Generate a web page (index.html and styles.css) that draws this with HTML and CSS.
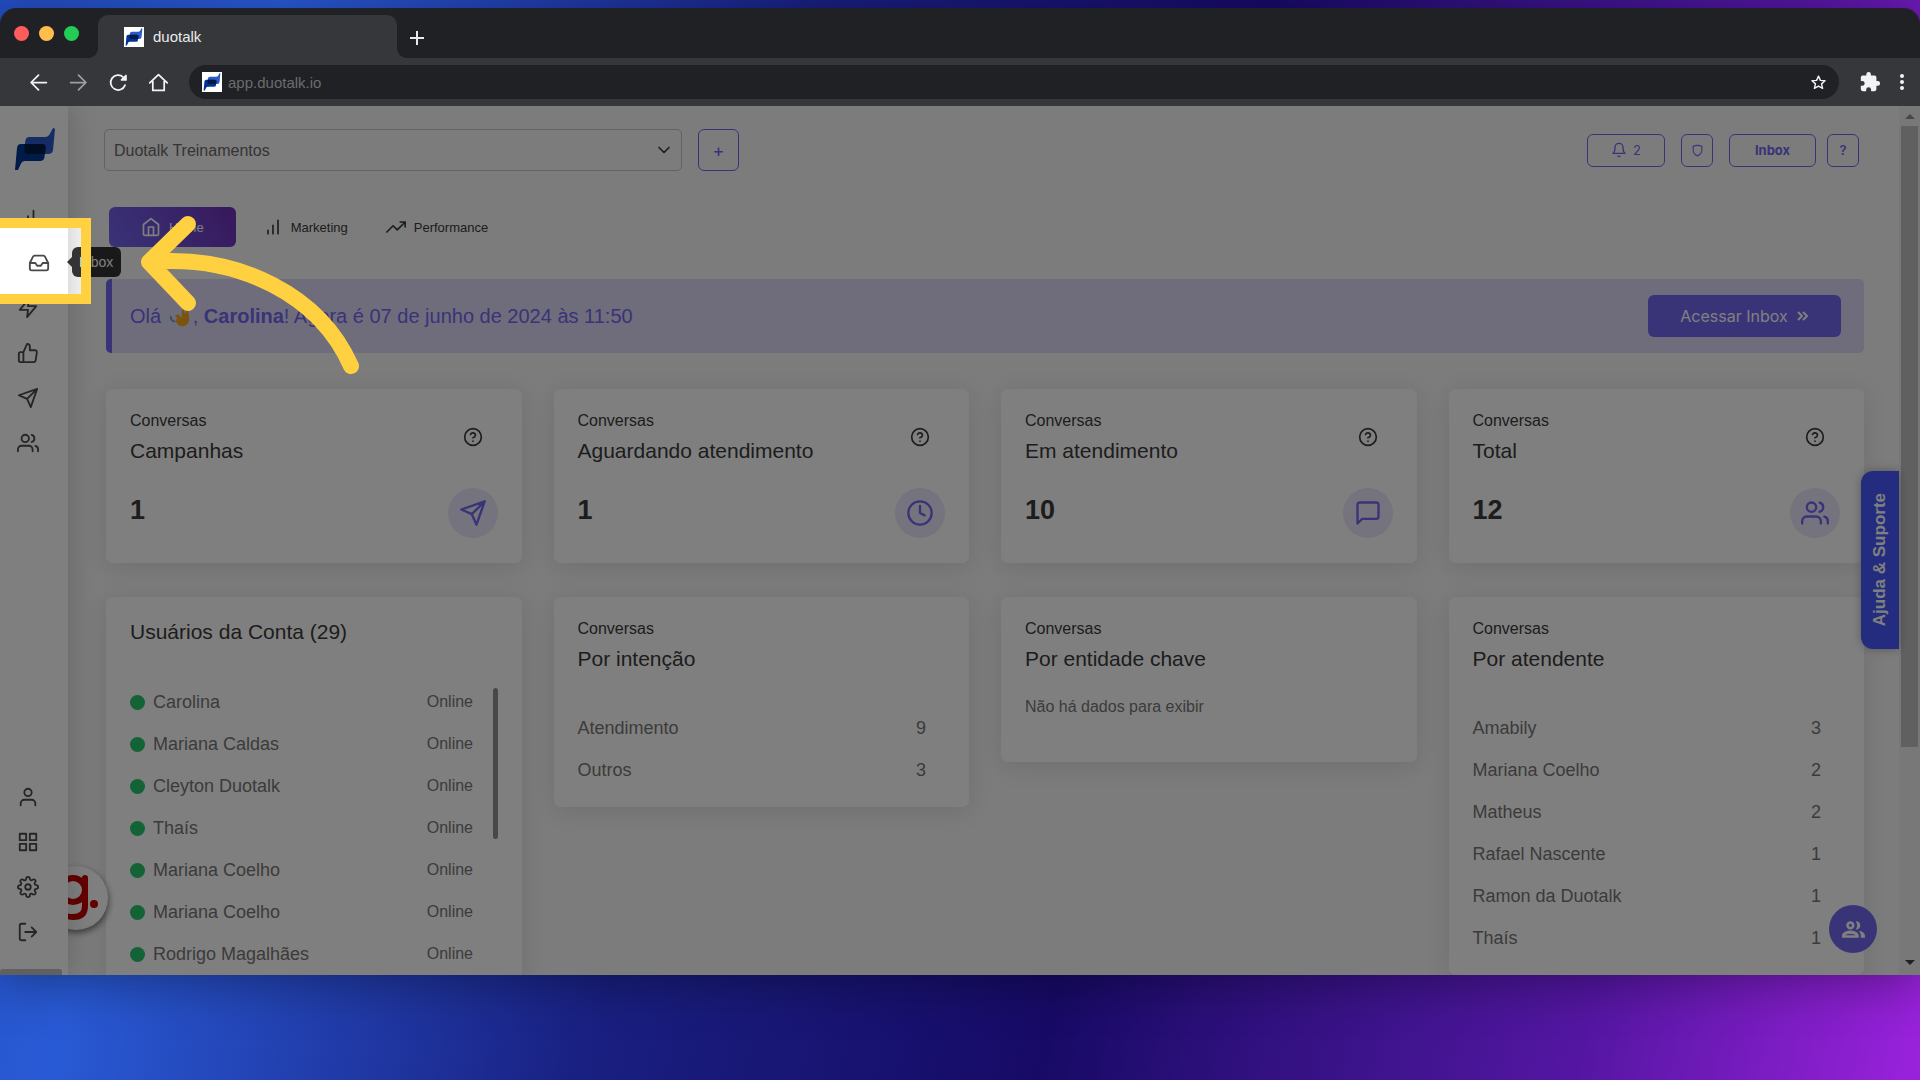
FILE: index.html
```html
<!DOCTYPE html>
<html lang="pt-BR">
<head>
    <meta charset="UTF-8">
    <meta name="viewport" content="width=device-width, initial-scale=1.0">
    <title>duotalk</title>
    <link rel="stylesheet" href="styles.css">
</head>
<body>
    <!-- icon set -->
    <svg class="sprite" aria-hidden="true">
        <symbol id="logo" viewBox="0 0 40 43">
            <path fill="#2b5bc8" d="M39 0 L40 1 L38 22 Q37.500 26 33 26 H13 Q9 26 9.300 22 L10.300 13 Q10.800 9 14.500 9 H30 Q33 9 34.500 6.500 L37.500 1 Q38 0 39 0z"/>
            <path fill="#003494" d="M6 16 H27 Q31 16 30.600 20 L29.500 29 Q29 33 25 33 H9.500 Q7 33 6 35.500 L3 42 H0 L2 20 Q2.400 16 6 16z"/>
            <path fill="#001a44" d="M9.900 16 H27 Q31 16 30.600 20 L29.900 26 H13 Q9 26 9.300 22z"/>
        </symbol>
        <symbol id="bars" viewBox="0 0 24 24"><path d="M18 20V4M12 20V10M6 20v-4"/></symbol>
        <symbol id="inbox" viewBox="0 0 24 24"><path d="M22 12h-6l-2 3h-4l-2-3H2"/><path d="M5.450 5.110L2 12v6a2 2 0 0 0 2 2h16a2 2 0 0 0 2-2v-6l-3.450-6.890A2 2 0 0 0 16.760 4H7.240a2 2 0 0 0-1.790 1.110z"/></symbol>
        <symbol id="zap" viewBox="0 0 24 24"><path d="M13 2L3 14h9l-1 8 10-12h-9l1-8z"/></symbol>
        <symbol id="thumb" viewBox="0 0 24 24"><path d="M14 9V5a3 3 0 0 0-3-3l-4 9v11h11.280a2 2 0 0 0 2-1.700l1.380-9a2 2 0 0 0-2-2.300zM7 22H4a2 2 0 0 1-2-2v-7a2 2 0 0 1 2-2h3"/></symbol>
        <symbol id="send" viewBox="0 0 24 24"><path d="M22 2L11 13M22 2l-7 20-4-9-9-4 20-7z"/></symbol>
        <symbol id="users" viewBox="0 0 24 24"><path d="M17 21v-2a4 4 0 0 0-4-4H5a4 4 0 0 0-4 4v2"/><circle cx="9" cy="7" r="4"/><path d="M23 21v-2a4 4 0 0 0-3-3.870M16 3.130a4 4 0 0 1 0 7.750"/></symbol>
        <symbol id="user" viewBox="0 0 24 24"><path d="M20 21v-2a4 4 0 0 0-4-4H8a4 4 0 0 0-4 4v2"/><circle cx="12" cy="7" r="4"/></symbol>
        <symbol id="grid" viewBox="0 0 24 24"><path d="M3 3h7v7H3zM14 3h7v7h-7zM14 14h7v7h-7zM3 14h7v7H3z"/></symbol>
        <symbol id="gear" viewBox="0 0 24 24"><circle cx="12" cy="12" r="3"/><path d="M19.400 15a1.650 1.650 0 0 0 .33 1.820l.06.06a2 2 0 0 1 0 2.830 2 2 0 0 1-2.830 0l-.06-.06a1.650 1.650 0 0 0-1.820-.33 1.650 1.650 0 0 0-1 1.510V21a2 2 0 0 1-2 2 2 2 0 0 1-2-2v-.09A1.650 1.650 0 0 0 9 19.400a1.650 1.650 0 0 0-1.820.33l-.06.06a2 2 0 0 1-2.830 0 2 2 0 0 1 0-2.830l.06-.06a1.650 1.650 0 0 0 .33-1.820 1.650 1.650 0 0 0-1.510-1H3a2 2 0 0 1-2-2 2 2 0 0 1 2-2h.09A1.650 1.650 0 0 0 4.600 9a1.650 1.650 0 0 0-.33-1.820l-.06-.06a2 2 0 0 1 0-2.830 2 2 0 0 1 2.830 0l.06.06a1.650 1.650 0 0 0 1.820.33H9a1.650 1.650 0 0 0 1-1.510V3a2 2 0 0 1 2-2 2 2 0 0 1 2 2v.09a1.650 1.650 0 0 0 1 1.510 1.650 1.650 0 0 0 1.820-.33l.06-.06a2 2 0 0 1 2.830 0 2 2 0 0 1 0 2.830l-.06.06a1.650 1.650 0 0 0-.33 1.820V9a1.650 1.650 0 0 0 1.510 1H21a2 2 0 0 1 2 2 2 2 0 0 1-2 2h-.09a1.650 1.650 0 0 0-1.510 1z"/></symbol>
        <symbol id="logout" viewBox="0 0 24 24"><path d="M9 21H5a2 2 0 0 1-2-2V5a2 2 0 0 1 2-2h4M16 17l5-5-5-5M21 12H9"/></symbol>
        <symbol id="home" viewBox="0 0 24 24"><path d="M3 9l9-7 9 7v11a2 2 0 0 1-2 2H5a2 2 0 0 1-2-2z"/><path d="M9 22V12h6v10"/></symbol>
        <symbol id="trend" viewBox="0 0 24 24"><path d="M23 6l-9.500 9.500-5-5L1 18M17 6h6v6"/></symbol>
        <symbol id="bell" viewBox="0 0 24 24"><path d="M18 8A6 6 0 0 0 6 8c0 7-3 9-3 9h18s-3-2-3-9M13.730 21a2 2 0 0 1-3.460 0"/></symbol>
        <symbol id="shield" viewBox="0 0 24 24"><path d="M12 22s8-4 8-10V4q-8-3-16 0v8c0 6 8 10 8 10z"/></symbol>
        <symbol id="help" viewBox="0 0 24 24"><circle cx="12" cy="12" r="10"/><path d="M9.090 9a3 3 0 0 1 5.830 1c0 2-3 3-3 3M12 17h.01"/></symbol>
        <symbol id="clock" viewBox="0 0 24 24"><circle cx="12" cy="12" r="10"/><path d="M12 6v6l4 2"/></symbol>
        <symbol id="message" viewBox="0 0 24 24"><path d="M21 15a2 2 0 0 1-2 2H7l-4 4V5a2 2 0 0 1 2-2h14a2 2 0 0 1 2 2z"/></symbol>
        <symbol id="chevron" viewBox="0 0 24 24"><path d="M6 9l6 6 6-6"/></symbol>
        <symbol id="back" viewBox="0 0 24 24"><path d="M21 12H4M12 3.500L3.500 12l8.500 8.500"/></symbol>
        <symbol id="forward" viewBox="0 0 24 24"><path d="M3 12h17M12 3.500l8.500 8.500-8.500 8.500"/></symbol>
        <symbol id="reload" viewBox="0 0 24 24"><path d="M19.500 15A8.500 8.500 0 1 1 17.500 6L20 8.500"/><path fill="currentColor" d="M20.500 4v5H15.500z"/></symbol>
        <symbol id="house" viewBox="0 0 24 24"><path d="M2 12.500L12 3l10 9.500M5.500 10.500V21h13V10.500"/></symbol>
        <symbol id="star" viewBox="0 0 24 24"><path d="M12 3l2.700 6 6.500.600-4.900 4.300 1.500 6.400L12 17l-5.800 3.300 1.500-6.400-4.900-4.300 6.500-.600z"/></symbol>
        <symbol id="puzzle" viewBox="0 0 24 24"><path d="M20.500 11H19V7a2 2 0 0 0-2-2h-4V3.500a2.500 2.500 0 0 0-5 0V5H4a2 2 0 0 0-2 2v3.800h1.500a2.700 2.700 0 0 1 0 5.400H2V20a2 2 0 0 0 2 2h3.800v-1.500a2.700 2.700 0 0 1 5.400 0V22H17a2 2 0 0 0 2-2v-4h1.500a2.500 2.500 0 0 0 0-5z"/></symbol>
    </svg>

    <div class="browser">
        <header class="tabstrip">
            <div class="lights"><span class="red"></span><span class="yellow"></span><span class="green"></span></div>
            <div class="tab">
                <span class="favicon"><svg><use href="#logo"/></svg></span>
                duotalk
            </div>
            <button class="new-tab" aria-label="Nova guia"></button>
        </header>
        <div class="toolbar">
            <button class="tool" aria-label="Voltar"><svg><use href="#back"/></svg></button>
            <button class="tool muted" aria-label="Avançar"><svg><use href="#forward"/></svg></button>
            <button class="tool" aria-label="Recarregar"><svg><use href="#reload"/></svg></button>
            <button class="tool" aria-label="Página inicial"><svg><use href="#house"/></svg></button>
            <div class="address">
                <span class="favicon"><svg><use href="#logo"/></svg></span>
                <input type="text" value="app.duotalk.io" aria-label="Endereço">
                <svg class="star"><use href="#star"/></svg>
            </div>
            <svg class="puzzle"><use href="#puzzle"/></svg>
            <div class="dots"><span></span><span></span><span></span></div>
        </div>

        <div class="app">
            <aside class="sidebar">
                <svg class="logo"><use href="#logo"/></svg>
                <nav class="menu">
                    <a href="#" aria-label="Dashboard"><svg><use href="#bars"/></svg></a>
                    <a href="#" class="active" aria-label="Inbox"><svg><use href="#inbox"/></svg><span class="tooltip">Inbox</span></a>
                    <a href="#" aria-label="Automações"><svg><use href="#zap"/></svg></a>
                    <a href="#" aria-label="Avaliações"><svg><use href="#thumb"/></svg></a>
                    <a href="#" aria-label="Campanhas"><svg><use href="#send"/></svg></a>
                    <a href="#" aria-label="Contatos"><svg><use href="#users"/></svg></a>
                </nav>
                <nav class="menu bottom">
                    <a href="#" aria-label="Perfil"><svg><use href="#user"/></svg></a>
                    <a href="#" aria-label="Aplicativos"><svg><use href="#grid"/></svg></a>
                    <a href="#" aria-label="Configurações"><svg><use href="#gear"/></svg></a>
                    <a href="#" aria-label="Sair"><svg><use href="#logout"/></svg></a>
                </nav>
                <div class="side-scroll"></div>
            </aside>

            <main class="content">
                <div class="topbar">
                    <div class="account">
                        <select aria-label="Conta"><option>Duotalk Treinamentos</option></select>
                        <svg><use href="#chevron"/></svg>
                    </div>
                    <button class="outline add">+</button>
                    <div class="actions">
                        <button class="outline bell"><svg><use href="#bell"/></svg>2</button>
                        <button class="outline square" aria-label="Segurança"><svg><use href="#shield"/></svg></button>
                        <button class="outline inbox-btn">Inbox</button>
                        <button class="outline square">?</button>
                    </div>
                </div>

                <nav class="tabs">
                    <a href="#" class="current"><svg><use href="#home"/></svg>Home</a>
                    <a href="#"><svg><use href="#bars"/></svg>Marketing</a>
                    <a href="#"><svg><use href="#trend"/></svg>Performance</a>
                </nav>

                <section class="banner">
                    <p>Olá <svg class="wave" viewBox="0 0 24 24"><path fill="#f0a818" d="M7 10l3-1 4 4V5l2-1 2 5 1-4 2 1 1 8c0 5-3 8-7 8-4 0-6-2-8-6l1-2 2 1-3-4z"/><path fill="none" stroke="#5c9fdd" stroke-width="2" d="M2 12q0 4 4 5"/></svg>, <strong>Carolina</strong>! Agora é 07 de junho de 2024 às 11:50</p>
                    <button class="primary">Acessar Inbox <svg viewBox="0 0 12 12"><path d="M1.500 2.500L5 6l-3.500 3.500M6.500 2.500L10 6l-3.500 3.500"/></svg></button>
                </section>

                <div class="cards">
                    <section class="card stat">
                        <div><small>Conversas</small><h2>Campanhas</h2><strong>1</strong></div>
                        <div class="side"><svg class="help"><use href="#help"/></svg><span class="badge"><svg><use href="#send"/></svg></span></div>
                    </section>
                    <section class="card stat">
                        <div><small>Conversas</small><h2>Aguardando atendimento</h2><strong>1</strong></div>
                        <div class="side"><svg class="help"><use href="#help"/></svg><span class="badge"><svg><use href="#clock"/></svg></span></div>
                    </section>
                    <section class="card stat">
                        <div><small>Conversas</small><h2>Em atendimento</h2><strong>10</strong></div>
                        <div class="side"><svg class="help"><use href="#help"/></svg><span class="badge"><svg><use href="#message"/></svg></span></div>
                    </section>
                    <section class="card stat">
                        <div><small>Conversas</small><h2>Total</h2><strong>12</strong></div>
                        <div class="side"><svg class="help"><use href="#help"/></svg><span class="badge"><svg><use href="#users"/></svg></span></div>
                    </section>

                    <section class="card">
                        <h2 class="solo">Usuários da Conta (29)</h2>
                        <div class="users">
                            <ul>
                                <li>Carolina<span>Online</span></li>
                                <li>Mariana Caldas<span>Online</span></li>
                                <li>Cleyton Duotalk<span>Online</span></li>
                                <li>Thaís<span>Online</span></li>
                                <li>Mariana Coelho<span>Online</span></li>
                                <li>Mariana Coelho<span>Online</span></li>
                                <li>Rodrigo Magalhães<span>Online</span></li>
                            </ul>
                            <div class="list-scroll"></div>
                        </div>
                    </section>
                    <section class="card">
                        <small>Conversas</small><h2>Por intenção</h2>
                        <table>
                            <tr><th scope="row">Atendimento</th><td>9</td></tr>
                            <tr><th scope="row">Outros</th><td>3</td></tr>
                        </table>
                    </section>
                    <section class="card">
                        <small>Conversas</small><h2>Por entidade chave</h2>
                        <p class="empty">Não há dados para exibir</p>
                    </section>
                    <section class="card">
                        <small>Conversas</small><h2>Por atendente</h2>
                        <table>
                            <tr><th scope="row">Amabily</th><td>3</td></tr>
                            <tr><th scope="row">Mariana Coelho</th><td>2</td></tr>
                            <tr><th scope="row">Matheus</th><td>2</td></tr>
                            <tr><th scope="row">Rafael Nascente</th><td>1</td></tr>
                            <tr><th scope="row">Ramon da Duotalk</th><td>1</td></tr>
                            <tr><th scope="row">Thaís</th><td>1</td></tr>
                        </table>
                    </section>
                </div>
            </main>

            <div class="scrollbar"><span class="up"></span><span class="thumb"></span><span class="down"></span></div>

            <div class="g-badge">
                <svg viewBox="0 0 64 64"><g fill="none" stroke="#c80000" stroke-width="6"><circle cx="29" cy="24" r="12"/><path d="M41 12v28q0 11-12 11-8 0-12-5"/></g><circle cx="50" cy="38" r="4" fill="#c80000" stroke="none"/></svg>
            </div>
            <button class="support">Ajuda &amp; Suporte</button>
            <button class="fab" aria-label="Equipe"><svg viewBox="0 0 24 24"><path fill-rule="evenodd" d="M9 4a4 4 0 1 0 0 8 4 4 0 0 0 0-8zm0 2.500a1.500 1.500 0 1 1 0 3 1.500 1.500 0 0 1 0-3zM1 18c0-3.500 5-5 8-5s8 1.500 8 5v2H1zm3 -.500h10c-1.500-1.500-8.500-1.500-10 0zM14 4c6-.700 6 8.700 0 8 2-2.300 2-5.700 0-8zM17 13.300c3 .400 6 2 6 4.700v2h-4v-2c0-2-.800-3.500-2-4.700z"/></svg></button>

            <div class="spotlight"></div>
            <svg class="arrow" viewBox="0 0 230 170"><path d="M58 24L19 62l39 41M19 62C110 54 190 96 221 166"/></svg>
        </div>
    </div>
</body>
</html>
```
FILE: styles.css
```css
* {
    box-sizing: border-box;
}

body {
    margin: 0;
    padding: 8px 0 105px;
    height: 100vh;
    overflow: hidden;
    display: flex;
    font-family: "Liberation Sans", Arial, sans-serif;
    color: #3a3a3a;
    background: linear-gradient(102deg, #234cc0 0%, #295ad5 13%, #191f80 38%, #170a66 59%, #2a0f78 66%, #411490 76%, #5416a2 84%, #9a22dc 100%);
}

svg {
    fill: none;
    stroke: currentColor;
    stroke-width: 2;
    stroke-linecap: round;
    stroke-linejoin: round;
    flex: none;
}

button, input, select {
    font: inherit;
}

button {
    cursor: pointer;
    padding: 0;
}

h2, p, ul {
    margin: 0;
    padding: 0;
}

a {
    color: inherit;
    text-decoration: none;
}

.sprite {
    position: absolute;
    width: 0;
    height: 0;
}

.browser {
    flex: 1;
    min-width: 0;
    display: flex;
    flex-direction: column;
    border-radius: 16px 16px 0 0;
    box-shadow: 0 8px 50px rgba(0, 0, 0, 0.35);
    overflow: hidden;
}

/* browser chrome */
.tabstrip {
    height: 50px;
    display: flex;
    align-items: flex-end;
    background: #202124;
}

.lights {
    align-self: center;
    display: flex;
    gap: 10px;
    padding-left: 14px;
    width: 98px;
}

.lights span {
    width: 15px;
    height: 15px;
    border-radius: 50%;
}

.red {
    background: #ff5c5c;
}

.yellow {
    background: #ffbd4c;
}

.green {
    background: #22cc55;
}

.tab {
    position: relative;
    width: 299px;
    height: 43px;
    display: flex;
    align-items: center;
    gap: 9px;
    padding: 0 26px;
    border-radius: 10px 10px 0 0;
    background: #36373a;
    color: #e8eaed;
    font-size: 15px;
}

.tab::before, .tab::after {
    content: "";
    position: absolute;
    bottom: 0;
    width: 10px;
    height: 10px;
}

.tab::before {
    left: -10px;
    background: radial-gradient(circle at 0 0, transparent 10px, #36373a 10px);
}

.tab::after {
    right: -10px;
    background: radial-gradient(circle at 100% 0, transparent 10px, #36373a 10px);
}

.favicon {
    width: 20px;
    height: 20px;
    padding: 1px;
    display: flex;
    background: #fff;
}

.favicon svg {
    width: 18px;
    height: 18px;
    stroke: none;
}

.new-tab {
    width: 14px;
    height: 14px;
    margin: 0 0 13px 13px;
    border: 0;
    background: linear-gradient(#e8eaed, #e8eaed) center / 14px 2px no-repeat, linear-gradient(#e8eaed, #e8eaed) center / 2px 14px no-repeat;
}

.toolbar {
    height: 48px;
    display: flex;
    align-items: center;
    padding: 0 12px 0 18px;
    background: #36373a;
    color: #f1f3f4;
}

.tool {
    width: 40px;
    height: 40px;
    display: flex;
    align-items: center;
    justify-content: center;
    border: 0;
    background: none;
    color: inherit;
}

.tool svg {
    width: 21px;
    height: 21px;
}

.muted {
    color: #9aa0a6;
}

.address {
    flex: 1;
    height: 34px;
    margin: 0 20px 0 11px;
    padding: 0 12px 0 13px;
    display: flex;
    align-items: center;
    gap: 6px;
    border-radius: 17px;
    background: #202124;
}

.address input {
    flex: 1;
    padding: 0;
    border: 0;
    background: none;
    color: #6b6c6f;
    font-size: 15px;
}

.star {
    width: 17px;
    height: 17px;
}

.puzzle {
    width: 22px;
    height: 22px;
    fill: currentColor;
    stroke: none;
}

.dots {
    width: 27px;
    padding-left: 19px;
    display: flex;
    flex-direction: column;
    gap: 2px;
}

.dots span {
    width: 4px;
    height: 4px;
    border-radius: 50%;
    background: #f1f3f4;
}

/* application */
.app {
    position: relative;
    flex: 1;
    min-height: 0;
    display: flex;
    overflow: hidden;
    background: #f8f8f8;
}

.sidebar {
    position: relative;
    z-index: 2;
    width: 68px;
    flex: none;
    display: flex;
    flex-direction: column;
    padding-top: 22px;
    background: #fff;
    box-shadow: 0 0 30px rgba(0, 0, 0, 0.2);
}

.logo {
    width: 40px;
    height: 43px;
    margin: 0 0 24px 15px;
    stroke: none;
}

.menu {
    display: flex;
    flex-direction: column;
}

.menu a {
    position: relative;
    width: 56px;
    height: 45px;
    display: flex;
    align-items: center;
    justify-content: center;
    color: #4a4a4a;
}

.menu svg {
    width: 22px;
    height: 22px;
}

.menu a.active {
    width: 78px;
}

.tooltip {
    position: absolute;
    left: 72px;
    top: 7px;
    padding: 0 8px 0 7px;
    border-radius: 6px;
    background: #333;
    color: #fff;
    font-size: 14px;
    line-height: 30px;
}

.tooltip::before {
    content: "";
    position: absolute;
    left: -5px;
    top: 10px;
    border: 5px solid transparent;
    border-left: 0;
    border-right-color: #333;
}

.bottom {
    margin-top: auto;
}

.side-scroll {
    width: 62px;
    height: 6px;
    margin-top: 15px;
    border-radius: 3px 3px 0 0;
    background: #c1c1c1;
}

.content {
    flex: 1;
    min-width: 0;
    padding: 23px 35px 0 36px;
}

.topbar {
    display: flex;
    align-items: center;
    gap: 16px;
}

.account {
    position: relative;
    flex: 0 1 578px;
}

.account select {
    display: block;
    width: 100%;
    height: 42px;
    padding: 0 36px 0 9px;
    appearance: none;
    border: 1px solid #c4c4c4;
    border-radius: 5px;
    background: none;
    color: #6a6a6a;
    font-size: 16px;
}

.account svg {
    position: absolute;
    right: 8px;
    top: 11px;
    width: 20px;
    height: 20px;
    pointer-events: none;
}

.outline {
    display: flex;
    align-items: center;
    justify-content: center;
    height: 33px;
    border: 1px solid #7367f0;
    border-radius: 6px;
    background: none;
    color: #7367f0;
    font-family: Inter, "Open Sans", sans-serif;
    font-size: 13px;
}

.add {
    width: 41px;
    height: 42px;
    font-size: 18px;
}

.actions {
    margin-left: auto;
    padding-right: 5px;
    display: flex;
    align-items: center;
    gap: 16px;
}

.actions svg {
    width: 16px;
    height: 16px;
}

.bell {
    width: 78px;
    gap: 6px;
}

.square {
    width: 32px;
    font-weight: 600;
}

.actions .square svg {
    width: 13px;
    height: 13px;
}

.inbox-btn {
    width: 87px;
    margin-right: -5px;
    font-weight: 700;
}

.tabs {
    display: flex;
    margin-top: 36px;
    padding-left: 5px;
}

.tabs a {
    height: 40px;
    padding: 0 19px;
    display: flex;
    align-items: center;
    gap: 8px;
    font-size: 13px;
}

.tabs svg {
    width: 20px;
    height: 20px;
}

.tabs .current {
    padding: 0 32px;
    margin-right: 8px;
    border-radius: 6px;
    background: linear-gradient(60deg, #7367f0, #7030b8);
    color: #fff;
}

.banner {
    display: flex;
    align-items: center;
    justify-content: space-between;
    height: 74px;
    margin: 32px 0 36px 2px;
    padding: 0 23px 0 18px;
    border-left: 6px solid #7367f0;
    border-radius: 5px;
    background: #dedbf7;
    color: #7367f0;
    font-size: 20px;
}

.wave {
    width: 22px;
    height: 22px;
    margin: 0 2px;
    vertical-align: -5px;
    stroke: none;
}

.primary {
    height: 42px;
    width: 193px;
    display: flex;
    align-items: center;
    justify-content: center;
    gap: 9px;
    border: 0;
    border-radius: 6px;
    background: #7367f0;
    color: #fff;
    font-family: Inter, "Open Sans", sans-serif;
    font-size: 16px;
}

.primary svg {
    width: 12px;
    height: 12px;
}

.cards {
    display: grid;
    grid-template-columns: repeat(4, 1fr);
    align-items: start;
    gap: 34px 32px;
    padding-left: 2px;
}

.card {
    padding: 20px 24px 16px;
    border-radius: 7px;
    background: #fff;
    box-shadow: 0 4px 24px rgba(34, 41, 47, 0.12);
}

.card small {
    display: block;
    font-size: 16px;
    line-height: 24px;
}

.card h2 {
    margin-top: 3px;
    font-size: 21px;
    font-weight: normal;
    line-height: 30px;
}

.card h2.solo {
    margin-top: 0;
}

.stat {
    display: flex;
    justify-content: space-between;
    padding-bottom: 25px;
}

.stat strong {
    display: block;
    margin-top: 29px;
    font-size: 27px;
    line-height: 30px;
}

.side {
    display: flex;
    flex-direction: column;
    align-items: center;
    gap: 41px;
    padding-top: 18px;
}

.help {
    width: 20px;
    height: 20px;
}

.badge {
    width: 50px;
    height: 50px;
    display: flex;
    align-items: center;
    justify-content: center;
    border-radius: 50%;
    background: #eae6fc;
    color: #7367f0;
}

.badge svg {
    width: 28px;
    height: 28px;
}

.users {
    display: flex;
    justify-content: space-between;
    margin-top: 34px;
    color: #777;
}

.users ul {
    flex: 0 1 343px;
    list-style: none;
}

.users li {
    display: flex;
    align-items: center;
    gap: 8px;
    height: 42px;
    font-size: 18px;
}

.users li::before {
    content: "";
    width: 15px;
    height: 15px;
    border-radius: 50%;
    background: #28c76f;
}

.users li span {
    margin-left: auto;
    font-size: 16px;
}

.list-scroll {
    width: 5px;
    height: 151px;
    margin-top: 7px;
    border-radius: 3px;
    background: #909090;
}

table {
    width: 100%;
    margin-top: 33px;
    border-collapse: collapse;
    color: #777;
    font-size: 18px;
}

th, td {
    height: 42px;
    padding: 0;
    font-weight: normal;
    text-align: left;
}

td {
    padding-right: 19px;
    text-align: right;
}

.empty {
    margin: 21px 0 27px;
    color: #777;
    font-size: 16px;
    line-height: 24px;
}

.scrollbar {
    width: 21px;
    flex: none;
    display: flex;
    flex-direction: column;
    align-items: center;
    padding: 8px 0 10px;
    background: #f1f1f1;
}

.scrollbar .thumb {
    width: 17px;
    height: 73%;
    margin: 7px 0 auto;
    background: #c1c1c1;
}

.up, .down {
    border: 5px solid transparent;
}

.up {
    border-top: 0;
    border-bottom-color: #909090;
}

.down {
    border-bottom: 0;
    border-top-color: #404040;
}

/* floating widgets */
.g-badge {
    position: absolute;
    z-index: 1;
    left: 44px;
    bottom: 45px;
    width: 64px;
    height: 64px;
    border-radius: 50%;
    background: #fff;
    box-shadow: 1px 3px 6px rgba(0, 0, 0, 0.5);
}

.support {
    position: absolute;
    right: 21px;
    top: 365px;
    width: 38px;
    height: 178px;
    border: 0;
    border-radius: 12px 0 0 12px;
    background: #4658ff;
    color: #fff;
    box-shadow: 0 0 10px rgba(0, 0, 0, 0.3);
    font-size: 17px;
    font-weight: bold;
    writing-mode: sideways-lr;
}

.fab {
    position: absolute;
    right: 43px;
    bottom: 22px;
    width: 48px;
    height: 48px;
    display: flex;
    align-items: center;
    justify-content: center;
    border: 0;
    border-radius: 50%;
    background: #7367f0;
    color: #fff;
}

.fab svg {
    width: 25px;
    height: 25px;
    fill: currentColor;
    stroke: none;
}

/* tutorial highlight, its shadow dims the rest of the app */
.spotlight {
    position: absolute;
    z-index: 3;
    left: -10px;
    top: 112px;
    width: 101px;
    height: 86px;
    border: 10px solid #ffd040;
    box-shadow: 0 0 0 4000px rgba(0, 0, 0, 0.5);
    pointer-events: none;
}

.arrow {
    position: absolute;
    z-index: 4;
    left: 130px;
    top: 94px;
    width: 230px;
    height: 170px;
    overflow: visible;
    stroke: #ffd040;
    stroke-width: 16;
    pointer-events: none;
}
```
